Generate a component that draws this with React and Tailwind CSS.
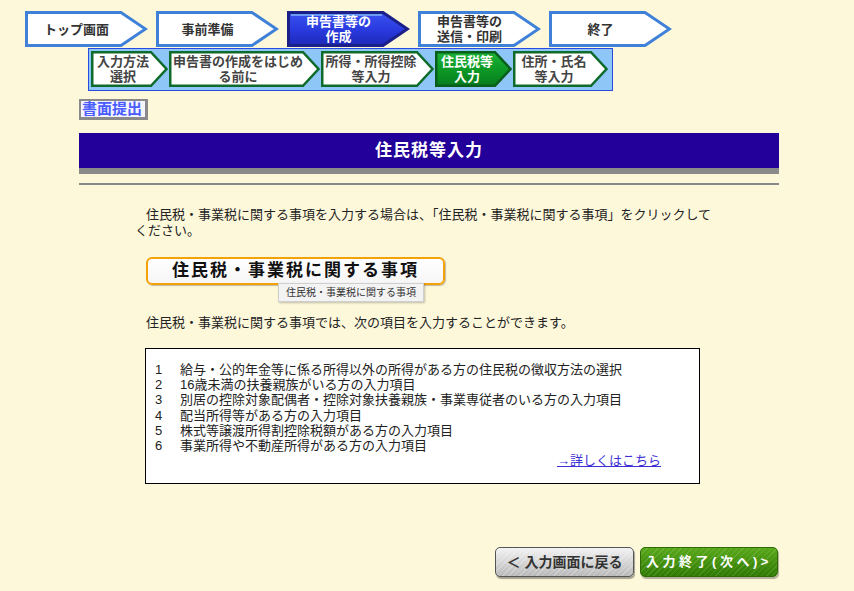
import React from "react";

const topSteps = [
  { label: ["トップ画面"] },
  { label: ["事前準備"] },
  { label: ["申告書等の", "作成"], active: true },
  { label: ["申告書等の", "送信・印刷"] },
  { label: ["終了"] },
];

const subSteps = [
  { label: ["入力方法", "選択"], w: 77 },
  { label: ["申告書の作成をはじめ", "る前に"], w: 151 },
  { label: ["所得・所得控除", "等入力"], w: 113 },
  { label: ["住民税等", "入力"], w: 77, active: true },
  { label: ["住所・氏名", "等入力"], w: 95 },
];

const items = [
  "給与・公的年金等に係る所得以外の所得がある方の住民税の徴収方法の選択",
  "16歳未満の扶養親族がいる方の入力項目",
  "別居の控除対象配偶者・控除対象扶養親族・事業専従者のいる方の入力項目",
  "配当所得等がある方の入力項目",
  "株式等譲渡所得割控除税額がある方の入力項目",
  "事業所得や不動産所得がある方の入力項目",
];

function TopStep({ label, active }) {
  return (
    <div className="relative w-[123px] h-[36px] flex items-center justify-center pr-[20px]">
      <svg className="absolute inset-0" width="123" height="36" viewBox="0 0 123 36">
        <defs>
          <linearGradient id="topBlue" x1="0" y1="0" x2="0" y2="1">
            <stop offset="0" stopColor="#3a52ee" />
            <stop offset="0.5" stopColor="#2a3be0" />
            <stop offset="1" stopColor="#1d29b8" />
          </linearGradient>
        </defs>
        <polygon
          points="1.5,1.5 96,1.5 120.5,18 96,34.5 1.5,34.5"
          fill={active ? "url(#topBlue)" : "#ffffff"}
          stroke={active ? "#1a2088" : "#3f80d8"}
          strokeWidth="3"
        />
        {active && <line x1="4" y1="4" x2="95" y2="4" stroke="#7fb4f4" strokeWidth="1.5" />}
      </svg>
      <div
        className={`relative text-center text-[13px] leading-[15px] font-bold ${
          active ? "text-white" : "text-[#333333]"
        }`}
      >
        {label.map((l) => (
          <div key={l}>{l}</div>
        ))}
      </div>
    </div>
  );
}

function SubStep({ label, w, active }) {
  return (
    <div
      className="relative h-[36px] flex items-center justify-center pr-[13px]"
      style={{ width: w }}
    >
      <svg className="absolute inset-0" width={w} height="36" viewBox={`0 0 ${w} 36`}>
        <defs>
          <linearGradient id="subGreen" x1="0" y1="0" x2="0" y2="1">
            <stop offset="0" stopColor="#1db236" />
            <stop offset="0.5" stopColor="#0c9a26" />
            <stop offset="1" stopColor="#087c1c" />
          </linearGradient>
        </defs>
        <polygon
          points={`1.25,1.25 ${w - 17},1.25 ${w - 1.5},18 ${w - 17},34.75 1.25,34.75`}
          fill={active ? "url(#subGreen)" : "#ffffff"}
          stroke={active ? "#0a5e1c" : "#0f6b2a"}
          strokeWidth="2.5"
        />
      </svg>
      <div
        className={`relative text-center text-[13px] leading-[15px] font-bold whitespace-nowrap ${
          active ? "text-white" : "text-[#444444]"
        }`}
      >
        {label.map((l) => (
          <div key={l}>{l}</div>
        ))}
      </div>
    </div>
  );
}

export default function App() {
  return (
    <div className="min-h-screen w-full bg-[#fef8db] pt-[11px] font-['Liberation_Sans','Noto_Sans_CJK_JP',sans-serif] text-[#222222]">
      {/* step bar */}
      <div className="flex gap-[8px] pl-[25px]">
        {topSteps.map((s, i) => (
          <TopStep key={i} {...s} />
        ))}
      </div>

      <div className="ml-[88px] mt-[1px] w-[525px] flex gap-[1px] border border-[#2a4ae0] bg-[#8ec6f8] pl-[2px] pt-[2px] pb-[3px]">
        {subSteps.map((s, i) => (
          <SubStep key={i} {...s} />
        ))}
      </div>

      <div className="ml-[79px] w-[700px]">
        <div className="mt-[8px] w-[69px] h-[21px] flex items-center whitespace-nowrap border-l-2 border-t-2 border-r-[3px] border-b-[3px] border-[#8a8a8a] bg-[#f4f4ff] pl-[1px] text-[15px] leading-[16px] font-bold text-[#4a5cff]">
          書面提出
        </div>

        <div className="mt-[13px] h-[35px] bg-[#220099] flex items-center justify-center text-white text-[17px] font-bold tracking-[1px]">
          住民税等入力
        </div>
        <div className="h-[6px] bg-[#8a8a8a]" />
        <div className="mt-[9px] h-[2px] bg-[#8a8a8a]" />

        <p className="mt-[22px] ml-[56px] text-[13px] leading-[16px] indent-[11px] whitespace-nowrap">
          住民税・事業税に関する事項を入力する場合は、「住民税・事業税に関する事項」をクリックして
          <br />
          ください。
        </p>

        <div className="relative mt-[18px] ml-[67px] w-[299px]">
          <button className="w-[299px] h-[28px] rounded-[6px] border-2 border-[#f5a10a] bg-[linear-gradient(#ffffff,#f6f6f6)] shadow-[1px_1px_1px_rgba(0,0,0,0.25)] flex items-center justify-center text-[17px] font-bold tracking-[2px] text-[#111111]">
            住民税・事業税に関する事項
          </button>
          <div className="absolute left-[132px] top-[26px] h-[19px] px-[7px] flex items-center bg-[#f3f3f3] border border-[#cfcfcf] shadow-[1px_1px_2px_rgba(0,0,0,0.25)] text-[10px] text-[#333333] whitespace-nowrap">
            住民税・事業税に関する事項
          </div>
        </div>

        <p className="mt-[30px] ml-[67px] text-[13px] leading-[16px]">
          住民税・事業税に関する事項では、次の項目を入力することができます。
        </p>

        <div className="mt-[17px] ml-[66px] w-[555px] h-[136px] border border-black bg-white pt-[13px] pl-[9px] pr-[38px] text-[13px] leading-[15.2px]">
          {items.map((t, i) => (
            <div key={i} className="flex">
              <span className="w-[25px] shrink-0">{i + 1}</span>
              <span>{t}</span>
            </div>
          ))}
          <div className="text-right">
            <a href="#" className="underline text-[#3d2fd6]">
              →詳しくはこちら
            </a>
          </div>
        </div>

        <div className="mt-[63px] flex justify-end gap-[6px] pr-[1px]">
          <button className="w-[139px] h-[30px] rounded-[5px] border border-[#555555] bg-[image:repeating-linear-gradient(135deg,rgba(255,255,255,0.25)_0_1px,transparent_1px_4px),linear-gradient(#f2f2f2,#b9b9b9)] shadow-[1px_2px_1px_rgba(0,0,0,0.35)] flex items-center justify-center text-[14px] font-bold text-[#333333]">
            ＜ 入力画面に戻る
          </button>
          <button className="w-[138px] h-[30px] rounded-[5px] border border-[#2f6a06] bg-[image:repeating-linear-gradient(135deg,rgba(255,255,255,0.12)_0_1px,transparent_1px_4px),linear-gradient(#58a81a,#2f7a02)] shadow-[1px_2px_1px_rgba(0,0,0,0.3)] flex items-center justify-center text-[13px] font-bold tracking-[3.5px] text-white">
            入力終了(次へ)&gt;
          </button>
        </div>
      </div>
    </div>
  );
}
